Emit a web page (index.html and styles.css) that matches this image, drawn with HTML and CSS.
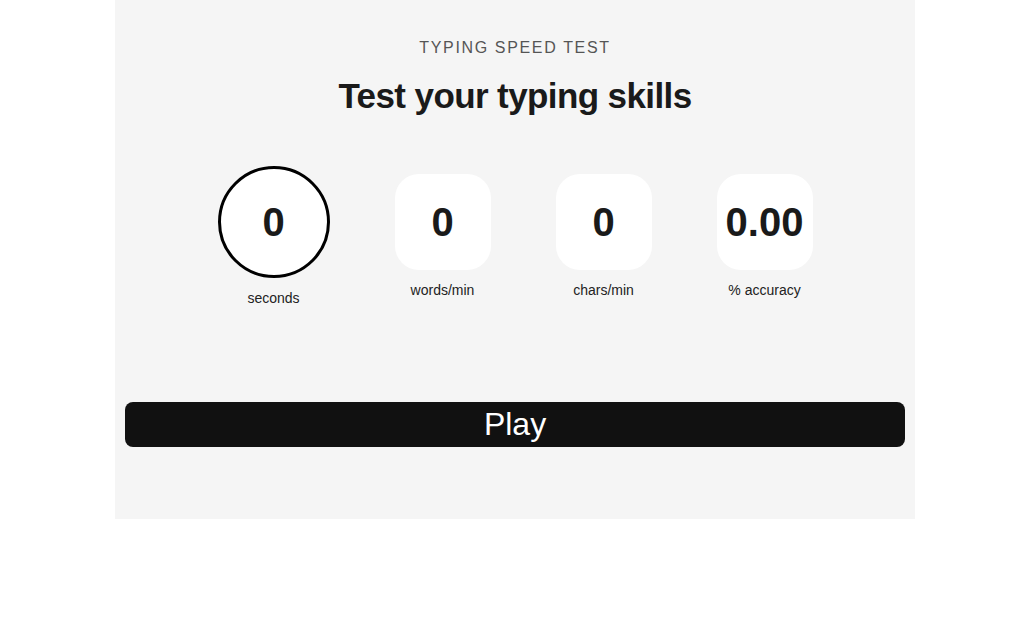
FILE: index.html
```html
<!DOCTYPE html>
<html lang="en">
<head>
<meta charset="utf-8">
<title>Typing Speed Test</title>
<link rel="stylesheet" href="styles.css">
</head>
<body>
<main class="app">
  <p class="eyebrow">TYPING SPEED TEST</p>
  <h1 class="title">Test your typing skills</h1>
  <section class="stats">
    <div class="stat">
      <div class="value ring">0</div>
      <span class="label">seconds</span>
    </div>
    <div class="stat">
      <div class="value box">0</div>
      <span class="label">words/min</span>
    </div>
    <div class="stat">
      <div class="value box">0</div>
      <span class="label">chars/min</span>
    </div>
    <div class="stat">
      <div class="value box">0.00</div>
      <span class="label">% accuracy</span>
    </div>
  </section>
  <button class="play" type="button">Play</button>
</main>
</body>
</html>
```
FILE: styles.css
```css
html, body {
  margin: 0;
  padding: 0;
  background: #ffffff;
  font-family: "Liberation Sans", Arial, sans-serif;
}

.app {
  width: 800px;
  box-sizing: border-box;
  margin: 0 0 0 115px;
  padding: 39px 10px 72px;
  background: #f5f5f5;
  display: flex;
  flex-direction: column;
  align-items: center;
}

.eyebrow {
  margin: 0;
  font-size: 16px;
  line-height: 18px;
  letter-spacing: 1.65px;
  color: #555555;
}

.title {
  margin: 17px 0 0;
  font-size: 35px;
  line-height: 43px;
  font-weight: 700;
  color: #1a1a1a;
  letter-spacing: -0.6px;
}

.stats {
  margin-top: 49px;
  display: flex;
  align-items: center;
  gap: 65px;
}

.stat {
  display: flex;
  flex-direction: column;
  align-items: center;
  gap: 12px;
}

.value {
  display: flex;
  align-items: center;
  justify-content: center;
  background: #ffffff;
  font-size: 40px;
  font-weight: 700;
  color: #1a1a1a;
  box-sizing: border-box;
}

.ring {
  width: 112px;
  height: 112px;
  border: 3px solid #000000;
  border-radius: 50%;
}

.box {
  width: 96px;
  height: 96px;
  border-radius: 24px;
}

.label {
  font-size: 14px;
  line-height: 16px;
  color: #222222;
}

.play {
  margin-top: 96px;
  width: 100%;
  height: 45px;
  border: none;
  border-radius: 8px;
  background: #111111;
  color: #ffffff;
  font-family: "Liberation Sans", Arial, sans-serif;
  font-size: 32px;
  line-height: 45px;
  padding: 0;
  cursor: pointer;
}
```
